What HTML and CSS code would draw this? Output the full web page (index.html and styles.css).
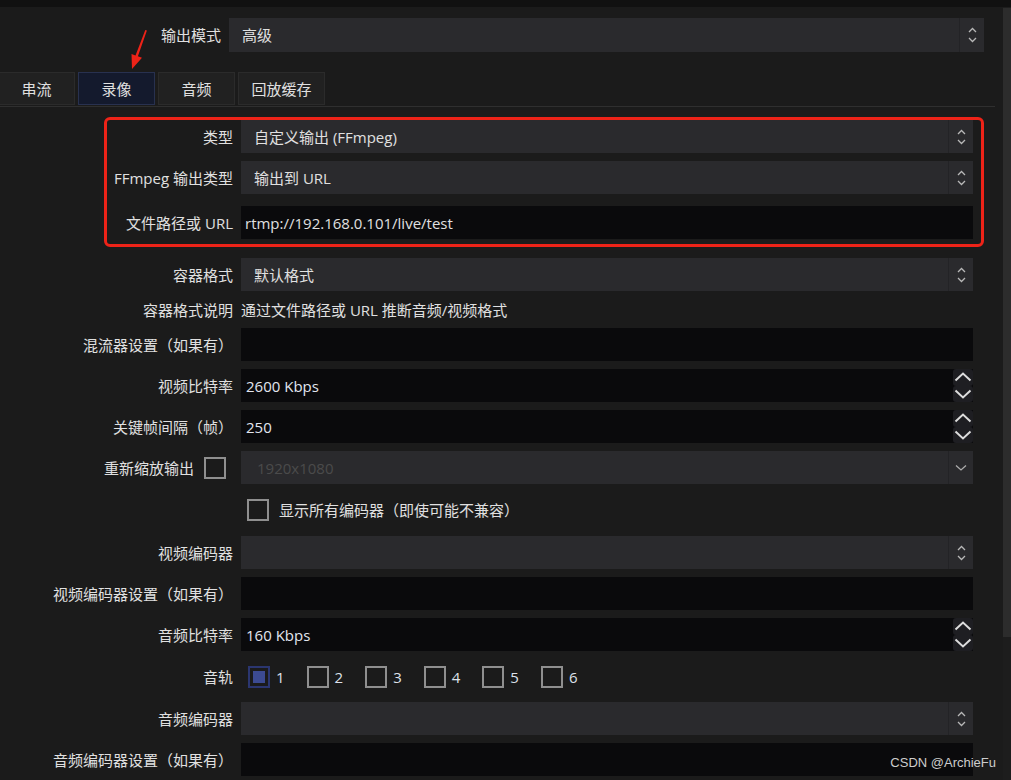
FILE: index.html
```html
<!DOCTYPE html>
<html lang="zh-CN">
<head>
    <meta charset="UTF-8">
    <title>输出设置</title>
    <link rel="stylesheet" href="styles.css">
</head>
<body>
    <div class="titlebar"></div>

    <div class="window">
        <div class="content">
            <!-- 输出模式 -->
            <div class="mode-row">
                <span class="label">输出模式</span>
                <div class="select">
                    <span class="value">高级</span>
                    <span class="arrows">
                        <svg width="9" height="16" viewBox="0 0 9 16"><path d="M1 5L4.5 1.5L8 5M1 11L4.5 14.5L8 11" fill="none" stroke="#b8b8b8" stroke-width="1.3"/></svg>
                    </span>
                </div>
            </div>

            <!-- 标签页 -->
            <div class="tabs">
                <div class="tab">串流</div>
                <div class="tab active">录像</div>
                <div class="tab">音频</div>
                <div class="tab wide">回放缓存</div>
            </div>

            <div class="pane">
                <div class="row">
                    <span class="label">类型</span>
                    <div class="select">
                        <span class="value">自定义输出 (FFmpeg)</span>
                        <span class="arrows"><svg width="9" height="16" viewBox="0 0 9 16"><path d="M1 5L4.5 1.5L8 5M1 11L4.5 14.5L8 11" fill="none" stroke="#b8b8b8" stroke-width="1.3"/></svg></span>
                    </div>
                </div>
                <div class="row">
                    <span class="label">FFmpeg 输出类型</span>
                    <div class="select">
                        <span class="value">输出到 URL</span>
                        <span class="arrows"><svg width="9" height="16" viewBox="0 0 9 16"><path d="M1 5L4.5 1.5L8 5M1 11L4.5 14.5L8 11" fill="none" stroke="#b8b8b8" stroke-width="1.3"/></svg></span>
                    </div>
                </div>
                <div class="row url-row">
                    <span class="label">文件路径或 URL</span>
                    <div class="input">rtmp://192.168.0.101/live/test</div>
                </div>

                <div class="row">
                    <span class="label">容器格式</span>
                    <div class="select">
                        <span class="value">默认格式</span>
                        <span class="arrows"><svg width="9" height="16" viewBox="0 0 9 16"><path d="M1 5L4.5 1.5L8 5M1 11L4.5 14.5L8 11" fill="none" stroke="#b8b8b8" stroke-width="1.3"/></svg></span>
                    </div>
                </div>
                <div class="row note">
                    <span class="label">容器格式说明</span>
                    <span>通过文件路径或 URL 推断音频/视频格式</span>
                </div>
                <div class="row">
                    <span class="label">混流器设置（如果有）</span>
                    <div class="input"></div>
                </div>
                <div class="row">
                    <span class="label">视频比特率</span>
                    <div class="spin">
                        <div class="input num">2600 Kbps</div>
                        <div class="spin-btns">
                            <span class="spin-btn"><svg width="18" height="10" viewBox="0 0 18 10"><path d="M1.5 8.5L9 1.5L16.5 8.5" fill="none" stroke="#dcdcdc" stroke-width="2"/></svg></span>
                            <span class="spin-btn"><svg width="18" height="10" viewBox="0 0 18 10"><path d="M1.5 1.5L9 8.5L16.5 1.5" fill="none" stroke="#dcdcdc" stroke-width="2"/></svg></span>
                        </div>
                    </div>
                </div>
                <div class="row">
                    <span class="label">关键帧间隔（帧）</span>
                    <div class="spin">
                        <div class="input num">250</div>
                        <div class="spin-btns">
                            <span class="spin-btn"><svg width="18" height="10" viewBox="0 0 18 10"><path d="M1.5 8.5L9 1.5L16.5 8.5" fill="none" stroke="#dcdcdc" stroke-width="2"/></svg></span>
                            <span class="spin-btn"><svg width="18" height="10" viewBox="0 0 18 10"><path d="M1.5 1.5L9 8.5L16.5 1.5" fill="none" stroke="#dcdcdc" stroke-width="2"/></svg></span>
                        </div>
                    </div>
                </div>
                <div class="row">
                    <span class="label with-box">重新缩放输出 <span class="checkbox"></span></span>
                    <div class="select disabled">
                        <span class="value">1920x1080</span>
                        <span class="arrows"><svg width="12" height="7" viewBox="0 0 12 7"><path d="M1 1.5L6 6L11 1.5" fill="none" stroke="#acacac" stroke-width="1.3"/></svg></span>
                    </div>
                </div>
                <div class="row check-row">
                    <span></span>
                    <div class="check-line">
                        <span class="checkbox"></span>
                        <span>显示所有编码器（即使可能不兼容）</span>
                    </div>
                </div>
                <div class="row">
                    <span class="label">视频编码器</span>
                    <div class="select">
                        <span class="value"></span>
                        <span class="arrows"><svg width="9" height="16" viewBox="0 0 9 16"><path d="M1 5L4.5 1.5L8 5M1 11L4.5 14.5L8 11" fill="none" stroke="#b8b8b8" stroke-width="1.3"/></svg></span>
                    </div>
                </div>
                <div class="row">
                    <span class="label">视频编码器设置（如果有）</span>
                    <div class="input"></div>
                </div>
                <div class="row">
                    <span class="label">音频比特率</span>
                    <div class="spin">
                        <div class="input num">160 Kbps</div>
                        <div class="spin-btns">
                            <span class="spin-btn"><svg width="18" height="10" viewBox="0 0 18 10"><path d="M1.5 8.5L9 1.5L16.5 8.5" fill="none" stroke="#dcdcdc" stroke-width="2"/></svg></span>
                            <span class="spin-btn"><svg width="18" height="10" viewBox="0 0 18 10"><path d="M1.5 1.5L9 8.5L16.5 1.5" fill="none" stroke="#dcdcdc" stroke-width="2"/></svg></span>
                        </div>
                    </div>
                </div>
                <div class="row tracks-row">
                    <span class="label">音轨</span>
                    <div class="tracks">
                        <span class="track"><span class="checkbox checked"></span>1</span>
                        <span class="track"><span class="checkbox"></span>2</span>
                        <span class="track"><span class="checkbox"></span>3</span>
                        <span class="track"><span class="checkbox"></span>4</span>
                        <span class="track"><span class="checkbox"></span>5</span>
                        <span class="track"><span class="checkbox"></span>6</span>
                    </div>
                </div>
                <div class="row">
                    <span class="label">音频编码器</span>
                    <div class="select">
                        <span class="value"></span>
                        <span class="arrows"><svg width="9" height="16" viewBox="0 0 9 16"><path d="M1 5L4.5 1.5L8 5M1 11L4.5 14.5L8 11" fill="none" stroke="#b8b8b8" stroke-width="1.3"/></svg></span>
                    </div>
                </div>
                <div class="row">
                    <span class="label">音频编码器设置（如果有）</span>
                    <div class="input"></div>
                </div>
            </div>
        </div>

        <div class="scrollbar"><div class="thumb"></div></div>
    </div>

    <!-- 标注 -->
    <svg class="pointer" width="200" height="80" viewBox="0 0 200 80">
        <path d="M145.3 30L146.9 30.5L137.9 56.2L142 57.7L132 69L131.5 53.9L135.5 55.4Z" fill="#ee2318"/>
    </svg>
    <div class="highlight"></div>
    <div class="watermark">CSDN @ArchieFu</div>
</body>
</html>
```

FILE: styles.css
```css
/* 基本设置 */
* {
    box-sizing: border-box;
}

body {
    margin: 0;
    height: 780px;
    overflow: hidden;
    position: relative;
    background: #1b1b1b;
    color: #e0e0e0;
    font-family: "Open Sans", "Noto Sans CJK SC", sans-serif;
    font-size: 15px;
    line-height: 20px;
}

.titlebar {
    height: 7px;
    background: #111;
}

.window {
    display: flex;
    height: 773px;
}

.content {
    width: 1003px;
}

/* 滚动条 */
.scrollbar {
    width: 8px;
    background: #1d1d1d;
    padding-top: 1px;
}

.thumb {
    height: 629px;
    background: #2c2c2c;
}

/* 输出模式 */
.mode-row {
    display: grid;
    grid-template-columns: 221px 755px;
    column-gap: 8px;
    align-items: center;
    height: 34px;
    margin-top: 11px;
}

.label {
    justify-self: end;
    white-space: nowrap;
}

/* 标签页 */
.tabs {
    display: flex;
    gap: 3px;
    margin: 20px 0 0 -2px;
}

.tab {
    width: 77px;
    height: 33px;
    display: flex;
    align-items: center;
    justify-content: center;
    background: #212121;
    border: 1px solid #2b2b2b;
}

.tab.wide {
    width: 87px;
}

.tab.active {
    background: #141a2d;
    border-color: #28314f;
}

.pane {
    width: 995px;
    margin-top: 1px;
    border-top: 1px solid #2f2f2f;
    padding-top: 13px;
}

/* 表单行 */
.row {
    display: grid;
    grid-template-columns: 233px 732px;
    column-gap: 8px;
    align-items: center;
    height: 33px;
    margin-bottom: 8px;
}

.row.url-row {
    margin-top: 12px;
    margin-bottom: 19px;
}

.row.note {
    height: 21px;
}

.row.check-row {
    height: 36px;
}

.row.tracks-row {
    height: 35px;
}

/* 下拉框 */
.select {
    display: flex;
    height: 100%;
    background: #2a2a2d;
}

.select .value {
    flex: 1;
    display: flex;
    align-items: center;
    padding-left: 13px;
}

.select .arrows {
    width: 25px;
    border-left: 1px solid #232326;
    display: flex;
    align-items: center;
    justify-content: center;
}

.select.disabled .value {
    color: #4b4b4b;
    padding-left: 16px;
}

/* 输入框 */
.input {
    height: 100%;
    display: flex;
    align-items: center;
    background: #0a0a0c;
    padding-left: 4px;
}

.input.num {
    color: #e2e6ef;
}

.spin {
    display: flex;
    height: 100%;
}

.spin .input {
    flex: 1;
    padding-left: 5px;
}

.spin-btns {
    width: 20px;
    display: flex;
    flex-direction: column;
    background: #0a0a0c;
}

.spin-btn {
    flex: 1;
    display: flex;
    align-items: center;
    justify-content: center;
    background: #1e1e22;
    border-radius: 3px;
}

/* 复选框 */
.checkbox {
    width: 22px;
    height: 22px;
    flex: none;
    border: 2px solid #8f8f8f;
    background: #1b1b1b;
}

.checkbox.checked {
    border-color: #2b3670;
    padding: 3px;
}

.checkbox.checked::after {
    content: "";
    display: block;
    width: 100%;
    height: 100%;
    background: #3c4b92;
}

.label.with-box {
    display: flex;
    align-items: center;
    gap: 10px;
    padding-right: 7px;
}

.check-line {
    display: flex;
    align-items: center;
    gap: 10px;
    padding-left: 6px;
}

.tracks {
    display: flex;
    gap: 22px;
    padding-left: 7px;
}

.track {
    display: flex;
    align-items: center;
    gap: 6px;
    color: #dde1ea;
}

/* 标注 */
.pointer {
    position: absolute;
    left: 0;
    top: 0;
}

.highlight {
    position: absolute;
    left: 104px;
    top: 117px;
    width: 880px;
    height: 130px;
    border: 3px solid #ee2318;
    border-radius: 6px;
}

.watermark {
    position: absolute;
    right: 15px;
    top: 755px;
    font: 13px/16px "Liberation Sans", Arial, sans-serif;
    color: #cdcdcd;
}
```
